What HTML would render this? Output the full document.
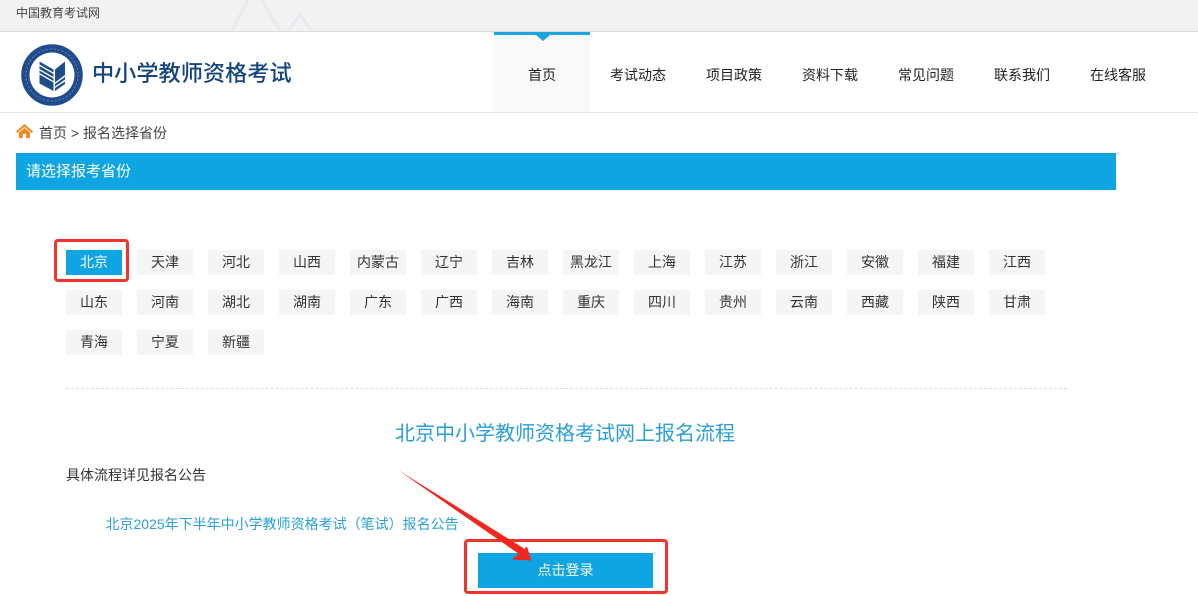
<!DOCTYPE html>
<html lang="zh-CN">
<head>
<meta charset="utf-8">
<title>中小学教师资格考试</title>
<style>
html,body{margin:0;padding:0;background:#fff}
body{width:1198px;height:596px;position:relative;overflow:hidden;font-family:"Liberation Sans","Noto Sans CJK SC",sans-serif;color:#333}
.a{position:absolute;white-space:nowrap}
.nav{position:absolute;top:32px;width:96px;height:80px;line-height:86px;text-align:center;font-size:14px;color:#222}
.p{position:absolute;width:56px;height:25px;line-height:25px;background:#f5f5f5;text-align:center;font-size:14px;color:#333}
</style>
</head>
<body>
<div class="a" style="left:0;top:0;width:1198px;height:31px;background:#f2f2f2;border-bottom:1px solid #ddd"></div>
<svg class="a" style="left:220px;top:0" width="100" height="31" fill="none" stroke="#e8eaf0" stroke-width="3"><path d="M12 31L28 0M42 0L60 31M68 31L80 14L92 31"/></svg>
<div class="a" style="left:16px;top:4px;font-size:12px;line-height:18px;color:#444">中国教育考试网</div>

<div class="a" style="left:0;top:112px;width:1198px;height:1px;background:#e4e4e4"></div>

<svg class="a" style="left:21px;top:44px" width="63" height="63" viewBox="0 0 63 63">
<circle cx="31" cy="31" r="30" fill="#1f4c8c" stroke="#1f4c8c" stroke-width="1.500"/>
<circle cx="31" cy="31" r="26" fill="none" stroke="#5f82b4" stroke-width="1" stroke-dasharray="2 2"/>
<circle cx="31" cy="31" r="22.500" fill="#fff"/>
<path d="M18.500 30.500L32.500 38.500V47L18.500 39.500Z" fill="#1f4c8c"/>
<path d="M18.500 17.500L32.500 25.500V28.500L18.500 20.500ZM18.500 22L32.500 30V33L18.500 25ZM18.500 26.500L32.500 34.500V37L18.500 29Z" fill="#1f4c8c"/>
<path d="M34 25.500L44 17.500V31L34 38.500Z" fill="#1f4c8c"/>
<path d="M34 40L44 33V35.500L34 42.500ZM34 44L44 37.500V40L34 47Z" fill="#1f4c8c"/>
</svg>
<div class="a" style="left:92px;top:57px;font-size:22.2px;line-height:34px;color:#15457f;font-weight:500">中小学教师资格考试</div>

<div class="a" style="left:494px;top:32px;width:96px;height:80px;background:#f9f9f9"></div>
<div class="a" style="left:494px;top:32px;width:96px;height:3px;background:#1da4de"></div>
<div class="a" style="left:536px;top:35px;width:0;height:0;border-left:7px solid transparent;border-right:7px solid transparent;border-top:6px solid #1da4de"></div>
<div class="nav" style="left:494px">首页</div>
<div class="nav" style="left:590px">考试动态</div>
<div class="nav" style="left:686px">项目政策</div>
<div class="nav" style="left:782px">资料下载</div>
<div class="nav" style="left:878px">常见问题</div>
<div class="nav" style="left:974px">联系我们</div>
<div class="nav" style="left:1070px">在线客服</div>

<svg class="a" style="left:16px;top:123px" width="18" height="16" viewBox="0 0 18 16"><path d="M8.500 1L17 8.500L15.800 10L8.500 3.800L1.200 10L0 8.500Z" fill="#f5861c"/><path d="M3 9.500L8.500 5L14 9.500V15H10.200V10.800H6.800V15H3Z" fill="#f5861c"/></svg>
<div class="a" style="left:39px;top:123px;font-size:14px;line-height:20px;color:#444">首页 &gt; 报名选择省份</div>

<div class="a" style="left:16px;top:153px;width:1100px;height:37px;background:#0fa5e3"></div>
<div class="a" style="left:26px;top:161px;font-size:15px;line-height:21px;color:#fff">请选择报考省份</div>

<div class="p" style="left:66px;top:250px;background:#0fa5e3;color:#fff">北京</div>
<div class="p" style="left:137px;top:250px">天津</div>
<div class="p" style="left:208px;top:250px">河北</div>
<div class="p" style="left:279px;top:250px">山西</div>
<div class="p" style="left:350px;top:250px">内蒙古</div>
<div class="p" style="left:421px;top:250px">辽宁</div>
<div class="p" style="left:492px;top:250px">吉林</div>
<div class="p" style="left:563px;top:250px">黑龙江</div>
<div class="p" style="left:634px;top:250px">上海</div>
<div class="p" style="left:705px;top:250px">江苏</div>
<div class="p" style="left:776px;top:250px">浙江</div>
<div class="p" style="left:847px;top:250px">安徽</div>
<div class="p" style="left:918px;top:250px">福建</div>
<div class="p" style="left:989px;top:250px">江西</div>

<div class="p" style="left:66px;top:290px">山东</div>
<div class="p" style="left:137px;top:290px">河南</div>
<div class="p" style="left:208px;top:290px">湖北</div>
<div class="p" style="left:279px;top:290px">湖南</div>
<div class="p" style="left:350px;top:290px">广东</div>
<div class="p" style="left:421px;top:290px">广西</div>
<div class="p" style="left:492px;top:290px">海南</div>
<div class="p" style="left:563px;top:290px">重庆</div>
<div class="p" style="left:634px;top:290px">四川</div>
<div class="p" style="left:705px;top:290px">贵州</div>
<div class="p" style="left:776px;top:290px">云南</div>
<div class="p" style="left:847px;top:290px">西藏</div>
<div class="p" style="left:918px;top:290px">陕西</div>
<div class="p" style="left:989px;top:290px">甘肃</div>

<div class="p" style="left:66px;top:330px">青海</div>
<div class="p" style="left:137px;top:330px">宁夏</div>
<div class="p" style="left:208px;top:330px">新疆</div>

<div class="a" style="left:54px;top:239px;width:69px;height:37px;border:3px solid #f0332b;border-radius:4px"></div>

<div class="a" style="left:66px;top:388px;width:1001px;height:0;border-top:1px dashed #ddd"></div>

<div class="a" style="left:395px;top:421px;font-size:20px;line-height:26px;color:#2a9fd6">北京中小学教师资格考试网上报名流程</div>
<div class="a" style="left:66px;top:465px;font-size:14px;line-height:20px;color:#333">具体流程详见报名公告</div>
<div class="a" style="left:105.500px;top:514px;font-size:14px;line-height:20px;color:#2a9fd6">北京2025年下半年中小学教师资格考试（笔试）报名公告</div>

<div class="a" style="left:478px;top:553px;width:175px;height:35px;line-height:35px;background:#0fa5e3;color:#fff;text-align:center;font-size:14px">点击登录</div>
<div class="a" style="left:464px;top:539px;width:198px;height:49px;border:3px solid #f0332b;border-radius:4px"></div>

<svg class="a" style="left:395px;top:465px" width="145" height="100" viewBox="0 0 145 100">
<path d="M3 5L129 83.500L125.500 90Z" fill="#f0261f"/>
<path d="M117 94.500L136.500 95.500L132 81.500Z" fill="#f0261f"/>
</svg>
</body>
</html>
